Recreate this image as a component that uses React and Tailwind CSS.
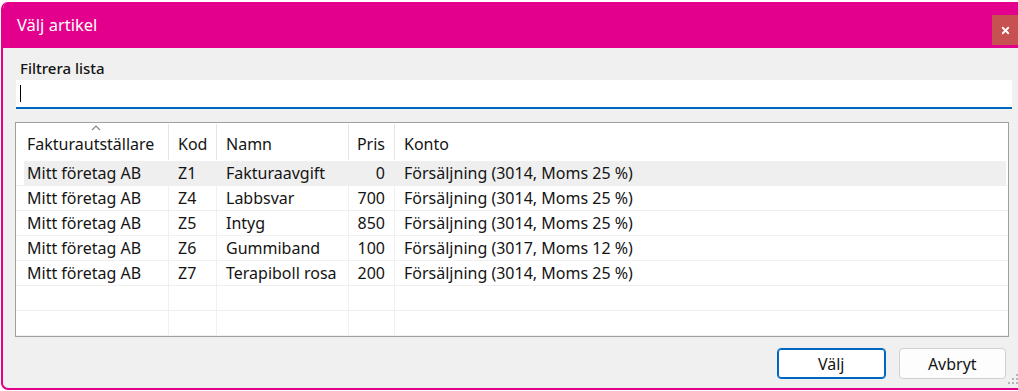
import { X } from 'lucide-react';

const rows = [
  { org: 'Mitt företag AB', kod: 'Z1', namn: 'Fakturaavgift', pris: '0', konto: 'Försäljning (3014, Moms 25 %)' },
  { org: 'Mitt företag AB', kod: 'Z4', namn: 'Labbsvar', pris: '700', konto: 'Försäljning (3014, Moms 25 %)' },
  { org: 'Mitt företag AB', kod: 'Z5', namn: 'Intyg', pris: '850', konto: 'Försäljning (3014, Moms 25 %)' },
  { org: 'Mitt företag AB', kod: 'Z6', namn: 'Gummiband', pris: '100', konto: 'Försäljning (3017, Moms 12 %)' },
  { org: 'Mitt företag AB', kod: 'Z7', namn: 'Terapiboll rosa', pris: '200', konto: 'Försäljning (3014, Moms 25 %)' },
  null,
  null,
];

const cols = 'grid grid-cols-[153px_48px_132px_46px_1fr]';

function Grip() {
  const dots = [[8, 0], [4, 4], [8, 4], [0, 8], [4, 8], [8, 8]];
  return (
    <svg width="11" height="11" viewBox="0 0 11 11" className="block">
      {dots.map(([x, y], i) => (
        <rect key={i} x={x} y={y} width="2" height="2" fill="#b4b4b4" />
      ))}
    </svg>
  );
}

export default function App() {
  return (
    <div
      className="h-[391px] w-[1018px] overflow-hidden bg-white pt-[2px] pl-[1px] text-[#141414]"
      style={{ fontFamily: '"Noto Sans", "Open Sans", sans-serif' }}
    >
      <div className="flex h-[388px] w-[1030px] flex-col overflow-hidden rounded-l-[7px] border-b-2 border-l-2 border-[#e3008c] bg-[#f0f0f0]">
        {/* title bar */}
        <div className="flex h-[46px] shrink-0 items-start justify-between bg-[#e3008c]">
          <span className="mt-[11px] ml-[14px] text-[16.5px] text-white">Välj artikel</span>
          <button className="mt-[13px] mr-[12px] flex h-[30px] w-[27px] items-center justify-center bg-[#c75050]">
            <X size={11} strokeWidth={4} color="white" />
          </button>
        </div>

        <div className="flex w-[1016px] flex-1 flex-col">
          <label className="mt-[10px] ml-[17px] text-[15px] font-medium leading-[21px]">Filtrera lista</label>
          <div className="mt-[1px] ml-[13px] flex h-[29px] w-[996px] items-center border-b-2 border-[#0067c0] bg-white pl-[4px]">
            <span className="h-[17px] w-[1px] bg-black" />
          </div>

          {/* list */}
          <div className="mt-[13px] ml-[12px] h-[215px] w-[994px] border border-[#a0a0a0] bg-white text-[16px]">
            <div className={`${cols} relative h-[38px]`}>
              <svg width="10" height="6" viewBox="0 0 10 6" className="absolute top-[2px] left-[75px]">
                <path d="M1 5 L5 1 L9 5" fill="none" stroke="#888" strokeWidth="1.2" />
              </svg>
              {['Fakturautställare', 'Kod', 'Namn', 'Pris', 'Konto'].map((h, i) => (
                <div
                  key={h}
                  className={`my-[1px] flex items-center pt-[4px] whitespace-nowrap ${i < 4 ? 'border-r border-[#e5e5e5]' : ''} ${i === 3 ? 'justify-end pr-[9px]' : i === 0 ? 'pl-[11px]' : 'pl-[9px]'}`}
                >
                  {h}
                </div>
              ))}
            </div>
            {rows.map((r, ri) => (
              <div
                key={ri}
                className={`${cols} h-[25px] border-b border-[#f0f0f0] ${ri === 0 ? 'bg-[linear-gradient(to_right,transparent_8px,#efefef_8px,#efefef_calc(100%-2px),transparent_calc(100%-2px))]' : ''}`}
              >
                {[r?.org, r?.kod, r?.namn, r?.pris, r?.konto].map((v, i) => (
                  <div
                    key={i}
                    className={`flex items-center whitespace-nowrap ${i < 4 ? (ri === 0 ? 'border-r border-transparent' : 'border-r border-[#f0f0f0]') : ''} ${i === 3 ? 'justify-end pr-[9px]' : i === 0 ? 'pl-[11px]' : 'pl-[9px]'}`}
                  >
                    {v}
                  </div>
                ))}
              </div>
            ))}
          </div>

          {/* buttons */}
          <div className="mt-[11px] flex items-start">
            <button className="ml-[774px] h-[31px] w-[109px] rounded-[4px] border border-[#0067c0] bg-white text-[16px] shadow-[inset_0_0_0_1px_#0067c0]">
              Välj
            </button>
            <button className="ml-[13px] h-[31px] w-[108px] rounded-[4px] border border-[#d0d0d0] bg-[#fdfdfd] text-[16px]">
              Avbryt
            </button>
            <div className="mt-[26px] ml-[2px]">
              <Grip />
            </div>
          </div>
        </div>
      </div>
    </div>
  );
}
